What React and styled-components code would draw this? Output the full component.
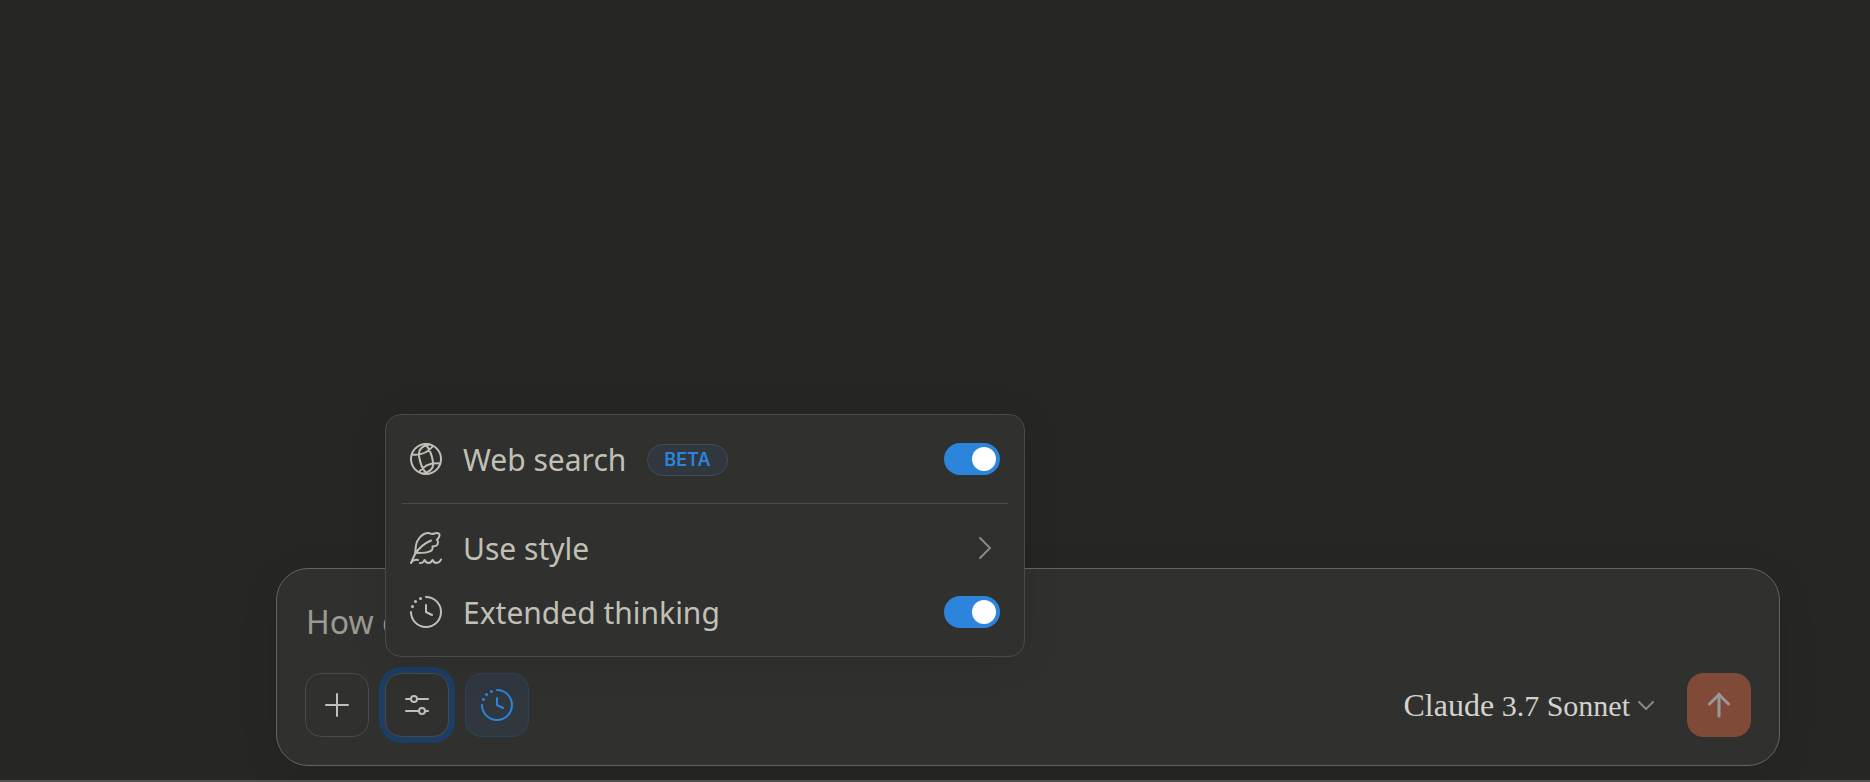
import React, { useState } from "react";
import styled, { createGlobalStyle } from "styled-components";

const GlobalStyle = createGlobalStyle`
  *, *::before, *::after { box-sizing: border-box; }
  body {
    margin: 0;
    background: #262624;
    color: #c2c0b6;
    font-family: "Noto Sans", "Open Sans", sans-serif;
  }
  button, textarea { font: inherit; color: inherit; }
`;

const Page = styled.main`
  min-height: 100vh;
  display: flex;
  flex-direction: column;
  justify-content: flex-end;
  padding: 0 90px 14px 276px;
  border-bottom: 2px solid #535250;
`;

const Composer = styled.form`
  display: flex;
  flex-direction: column;
  gap: 24px;
  padding: 28px;
  border: 1px solid #656461;
  border-radius: 32px;
  background: #30302e;
  box-shadow: 0 8px 40px rgba(0, 0, 0, 0.08);
`;

const Prompt = styled.textarea`
  display: block;
  width: 100%;
  height: 52px;
  padding: 0 1px;
  border: 0;
  outline: 0;
  resize: none;
  overflow: hidden;
  background: transparent;
  font-size: 32px;
  line-height: 50px;
  &::placeholder { color: #9c9a92; opacity: 1; }
`;

const Toolbar = styled.div`
  display: flex;
  align-items: center;
  gap: 16px;
`;

const Spacer = styled.div`
  flex: 1;
`;

const MenuAnchor = styled.div`
  position: relative;
`;

const tones = {
  plain: { bg: "#30302e", line: "#4a4a47", ink: "#c2c0b6" },
  active: { bg: "#30373e", line: "#2e4358", ink: "#2c84db" },
  send: { bg: "#7f4a37", line: "#7f4a37", ink: "#989896" },
};

const SquareButton = styled.button`
  display: grid;
  place-items: center;
  width: 64px;
  height: 64px;
  padding: 0;
  border: 1px solid ${({ $tone }) => tones[$tone].line};
  border-radius: 16px;
  background: ${({ $tone }) => tones[$tone].bg};
  color: ${({ $tone }) => tones[$tone].ink};
  box-shadow: ${({ $ring }) => ($ring ? "0 0 0 6px #1c3e62" : "none")};
  outline: 0;
`;

const ModelButton = styled.button`
  display: flex;
  align-items: center;
  gap: 8px;
  padding: 0 17px;
  border: 0;
  background: transparent;
  color: #d3d2ce;
  font-family: "Liberation Serif", serif;
  font-size: 30px;
  line-height: 36px;
`;

const Brand = styled.span`
  font-size: 32px;
`;

const Menu = styled.div`
  position: absolute;
  left: 0;
  bottom: calc(100% + 16px);
  z-index: 1;
  width: 640px;
  padding: 12px;
  border: 1px solid #4a4a47;
  border-radius: 16px;
  background: #30302e;
  box-shadow: 0 4px 40px rgba(0, 0, 0, 0.08);
`;

const rowLayout = `
  display: flex;
  align-items: center;
  gap: 21px;
  width: 100%;
  height: 64px;
  padding: 0 12px;
  font-size: 30px;
  line-height: 40px;
`;

const SwitchRow = styled.label`
  ${rowLayout}
`;

const ButtonRow = styled.button`
  ${rowLayout}
  border: 0;
  background: transparent;
  text-align: left;
`;

const RowText = styled.span`
  flex: 1;
  display: flex;
  align-items: center;
  gap: 21px;
  padding-top: 2px;
`;

const Badge = styled.span`
  padding: 0 16px;
  border: 1px solid #414b55;
  border-radius: 16px;
  background: #30373e;
  color: #2c84db;
  font-family: Inter, sans-serif;
  font-size: 18px;
  font-weight: 600;
  line-height: 30px;
`;

const Divider = styled.hr`
  height: 1px;
  margin: 12px 4px;
  border: 0;
  background: #4a4a47;
`;

const Switch = styled.input`
  appearance: none;
  display: flex;
  align-items: center;
  width: 56px;
  height: 32px;
  margin: 0;
  padding: 0 4px;
  border-radius: 16px;
  background: #5e5d59;
  &::before {
    content: "";
    width: 24px;
    height: 24px;
    border-radius: 50%;
    background: #fff;
  }
  &:checked {
    justify-content: flex-end;
    background: #2c84db;
  }
`;

const Icon = ({ size = 32, stroke = 2, children }) => (
  <svg
    width={size}
    height={size}
    viewBox={`0 0 ${size} ${size}`}
    fill="none"
    stroke="currentColor"
    strokeWidth={stroke}
    strokeLinecap="round"
    strokeLinejoin="round"
    aria-hidden="true"
  >
    {children}
  </svg>
);

const GlobeIcon = () => (
  <Icon>
    <circle cx="16" cy="16" r="15" />
    <path d="M19 1.5C12 3 8 7 9 13c1 7 3 13 8 18M13 30.5C20 29 24 25 23 19c-1-7-3-13-8-18M2 11.5C10 12.500 18 9.500 23 3M30 20.500C22 19.500 14 22.500 9 29" />
  </Icon>
);

const QuillIcon = () => (
  <Icon>
    <path d="M1 31l4-9C6 17 5 12 8 8c2.500-4 6-7 10-7 2 0 3 1 4 1 2 0 3-1 5-1 2.500 0 3 2 2 4-.5 1.500-2 2-2 3 1.500 1 1 5-.5 5.500-1.500 1-3 .5-4 1 .5 2-.5 4-2 4.500-3 2-9 2-14.500 2M21 8.500C14 11.500 9 16 5 22" />
    <path d="M2 29.500c2-1.500 4-2 6-1.500M10 31c3 0 3.500-1 4.500-3 1 2 2 3 4 3s3-1 4-3c1 2 2 3 4 3s3.500-1 4.500-3.500" />
  </Icon>
);

const ClockIcon = () => (
  <Icon>
    <path d="M16 1a15 15 0 1 1-15 15M16 9v7l6 3" />
    <g fill="currentColor" stroke="none">
      <circle cx="10.5" cy="2.5" r="1.5" />
      <circle cx="5.5" cy="5.5" r="1.5" />
      <circle cx="2.5" cy="10.5" r="1.5" />
    </g>
  </Icon>
);

const PlusIcon = () => (
  <Icon>
    <path d="M16 5v22M5 16h22" />
  </Icon>
);

const SlidersIcon = () => (
  <Icon>
    <path d="M5 10h5M17 10h10M5 22h13M25 22h2" />
    <circle cx="13" cy="10" r="3" />
    <circle cx="21" cy="22" r="3" />
  </Icon>
);

const ArrowIcon = () => (
  <Icon stroke={3}>
    <path d="M16 27V5M6.500 15L16 5.500l9.500 9.500" />
  </Icon>
);

const ChevronRight = () => (
  <Icon size={32}>
    <path d="M12 6l10 10-10 10" stroke="#8a8980" />
  </Icon>
);

const ChevronDown = () => (
  <Icon size={16}>
    <path d="M1 5l7 7 7-7" stroke="#8a8980" />
  </Icon>
);

export default function App() {
  const [search, setSearch] = useState(true);
  const [thinking, setThinking] = useState(true);

  return (
    <>
      <GlobalStyle />
      <Page>
        <Composer onSubmit={(e) => e.preventDefault()}>
          <Prompt rows={1} aria-label="Message" placeholder="How can I help you today?" />
          <Toolbar>
            <SquareButton type="button" $tone="plain" aria-label="Add content">
              <PlusIcon />
            </SquareButton>
            <MenuAnchor>
              <SquareButton type="button" $tone="plain" $ring aria-label="Tools" aria-expanded="true">
                <SlidersIcon />
              </SquareButton>
              <Menu>
                <SwitchRow>
                  <GlobeIcon />
                  <RowText>
                    Web search <Badge>BETA</Badge>
                  </RowText>
                  <Switch type="checkbox" role="switch" checked={search} onChange={(e) => setSearch(e.target.checked)} />
                </SwitchRow>
                <Divider />
                <ButtonRow type="button">
                  <QuillIcon />
                  <RowText>Use style</RowText>
                  <ChevronRight />
                </ButtonRow>
                <SwitchRow>
                  <ClockIcon />
                  <RowText>Extended thinking</RowText>
                  <Switch type="checkbox" role="switch" checked={thinking} onChange={(e) => setThinking(e.target.checked)} />
                </SwitchRow>
              </Menu>
            </MenuAnchor>
            <SquareButton
              type="button"
              $tone={thinking ? "active" : "plain"}
              aria-label="Extended thinking"
              aria-pressed={thinking}
              onClick={() => setThinking(!thinking)}
            >
              <ClockIcon />
            </SquareButton>
            <Spacer />
            <ModelButton type="button">
              <span>
                <Brand>Claude</Brand> 3.7 Sonnet
              </span>
              <ChevronDown />
            </ModelButton>
            <SquareButton type="submit" $tone="send" aria-label="Send message">
              <ArrowIcon />
            </SquareButton>
          </Toolbar>
        </Composer>
      </Page>
    </>
  );
}
